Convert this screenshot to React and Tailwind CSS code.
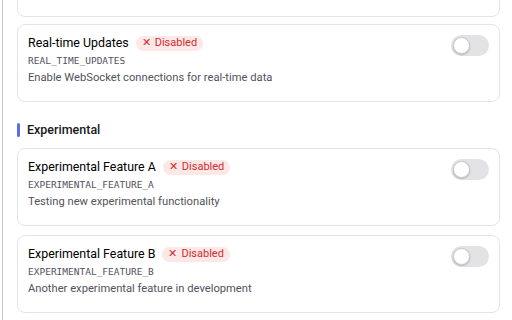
import React from 'react';

const flags = {
  general: [
    {
      name: 'Real-time Updates',
      key: 'REAL_TIME_UPDATES',
      desc: 'Enable WebSocket connections for real-time data',
    },
  ],
  experimental: [
    {
      name: 'Experimental Feature A',
      key: 'EXPERIMENTAL_FEATURE_A',
      desc: 'Testing new experimental functionality',
    },
    {
      name: 'Experimental Feature B',
      key: 'EXPERIMENTAL_FEATURE_B',
      desc: 'Another experimental feature in development',
    },
  ],
};

function Toggle() {
  return (
    <div className="w-[38px] h-[21px] rounded-full bg-[#e3e3e6] flex items-center px-[2px] shrink-0">
      <div className="w-[17px] h-[17px] rounded-full bg-white border border-[#c8c8cc] shadow-[0_1px_2px_rgba(0,0,0,0.2)]" />
    </div>
  );
}

function FlagCard({ flag }) {
  return (
    <div className="h-[78px] shrink-0 rounded-lg border border-[#e4e4e7] bg-white pl-[10px] pr-[10px] pt-[10px] flex items-start justify-between">
      <div className="flex flex-col">
        <div className="flex items-center gap-[7px] h-[16px]">
          <span className="text-[12.4px] font-normal text-[#000000]">{flag.name}</span>
          <span className="flex items-center gap-[4px] h-[15px] px-[6px] rounded-full bg-[#fde8e8] text-[11px] text-[#d12c2c]">
            <span className="text-[11px]">✕</span>
            Disabled
          </span>
        </div>
        <div className="h-[17px] leading-[17px] mt-[1px] text-[9.5px] text-[#52525b] font-['DejaVu_Sans_Mono',monospace]">
          {flag.key}
        </div>
        <div className="h-[17px] leading-[17px] text-[11.2px] text-[#52525b]">{flag.desc}</div>
      </div>
      <Toggle />
    </div>
  );
}

export default function App() {
  return (
    <div className="w-[512px] h-[320px] overflow-hidden bg-white font-['Roboto',sans-serif]">
      <div className="ml-[2px] h-full border-l border-[#c4c4c4] pl-[14px] pr-[12px] flex flex-col">
        <div className="mt-[-61px] flex flex-col gap-[7px]">
          <div className="h-[78px] shrink-0 rounded-lg border border-[#e4e4e7] bg-white" />
          {flags.general.map((f) => (
            <FlagCard key={f.key} flag={f} />
          ))}
        </div>

        <div className="mt-[21px] mb-[11px] h-[14px] shrink-0 flex items-center">
          <div className="w-[3px] h-[14px] rounded-full bg-[#5b6ee8]" />
          <span className="ml-[7px] text-[12.5px] font-medium text-[#18181b]">Experimental</span>
        </div>

        <div className="flex flex-col gap-[9px]">
          {flags.experimental.map((f) => (
            <FlagCard key={f.key} flag={f} />
          ))}
        </div>
      </div>
    </div>
  );
}
